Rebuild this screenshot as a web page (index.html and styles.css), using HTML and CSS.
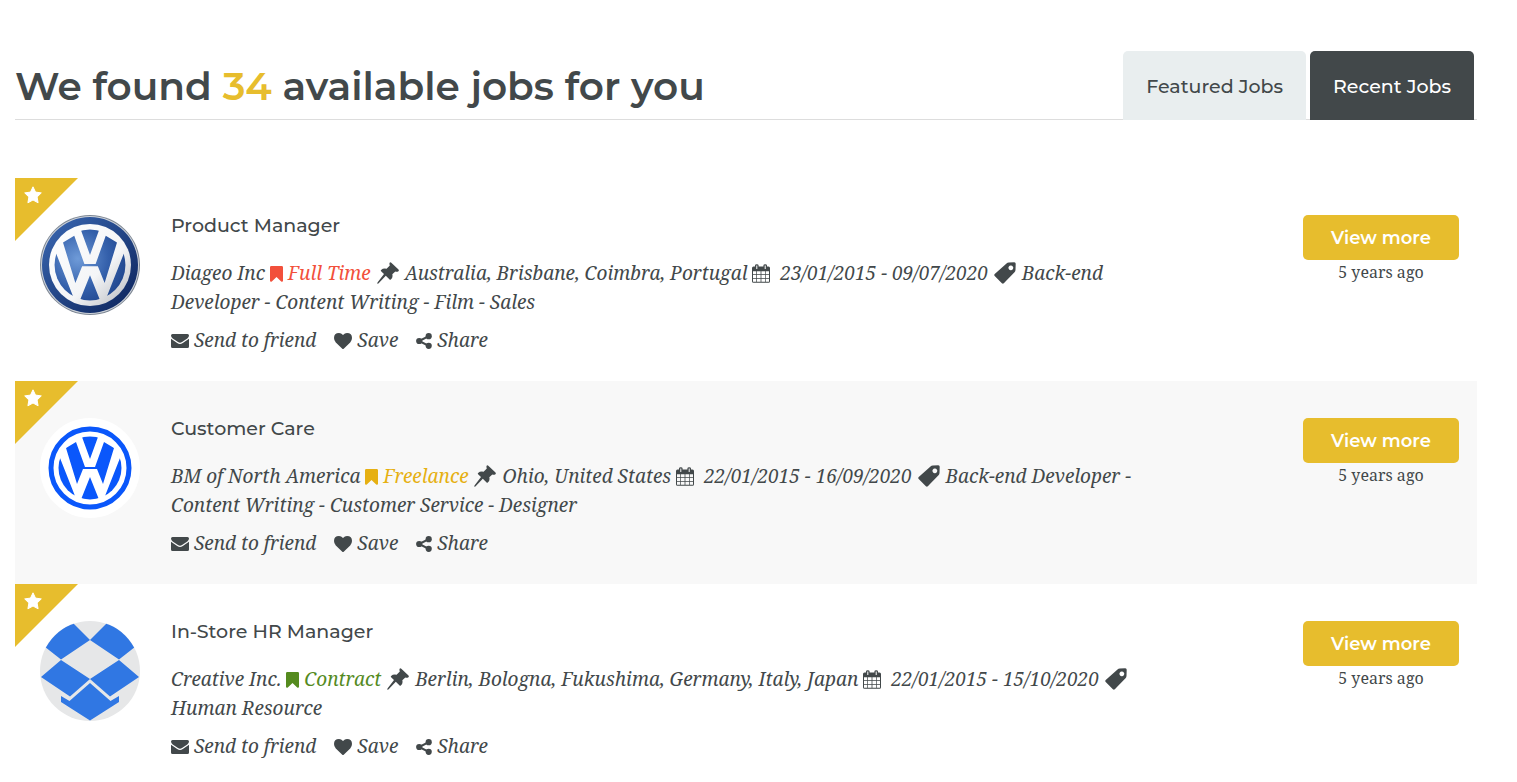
FILE: index.html
```
<!DOCTYPE html>
<html lang="en">
<head>
  <meta charset="UTF-8">
  <meta name="viewport" content="width=device-width, initial-scale=1">
  <title>Jobs</title>
  <link rel="stylesheet" href="styles.css">
</head>
<body>

  <!-- shared icons -->
  <svg class="sprite" aria-hidden="true">
    <symbol id="star" viewBox="0 0 18 18"><path d="M9 .8l2.500 5.300 5.800.8-4.200 4.100 1 5.800L9 14l-5.100 2.800 1-5.800L.7 6.900l5.800-.8z" stroke="currentColor" stroke-linejoin="round"/></symbol>
    <symbol id="bookmark" viewBox="0 0 13 16"><path d="M1.300 0h10.400Q13 0 13 1.300V14.700Q12.700 16.400 11.200 15.500L6.500 11l-4.700 4.500Q.3 16.400 0 14.700V1.300Q0 0 1.300 0z"/></symbol>
    <symbol id="pin" viewBox="0 0 22 22"><path d="M12.600.8q.8-.9 1.700-.1l7.200 6.900q.7.900-.1 1.600-1.500.9-3.100.2L15.300 12.300q.9 3.100-1.500 5.200-.6.400-1.200-.1l-3.800-3.600L1.400 21.400.2 21.700l.3-1.200L7 11.900 4.100 9.200q-.6-.6 0-1.200 2.200-2 5.500-1.200l3.200-3.200q-.6-1.500-.2-2.800z"/></symbol>
    <symbol id="calendar" viewBox="0 0 18 19"><path fill-rule="evenodd" d="M1.500 2.500H3V1.600Q3 .2 4.800.2t1.800 1.400v.9h4.800v-.9Q11.400.2 13.200.2T15 1.600v.9h1.500Q18 2.500 18 4v13.300q0 1.500-1.500 1.500h-15Q0 18.800 0 17.300V4q0-1.500 1.500-1.500zM4.300 1.500v3.600h1V1.500zm8.400 0v3.600h1V1.500zM1 7.300v3h3.300v-3zm4 0v3h3.600v-3zm4.400 0v3H13v-3zm4.300 0v3H17v-3zM1 11v3.200h3.300V11zm4 0v3.200h3.600V11zm4.400 0v3.200H13V11zm4.300 0v3.200H17V11zM1 14.900v2.900h3.300v-2.900zm4 0v2.900h3.600v-2.900zm4.400 0v2.900H13v-2.900zm4.300 0v2.900H17v-2.900z"/></symbol>
    <symbol id="tag" viewBox="0 0 22 22"><path fill-rule="evenodd" d="M12.500 1.400Q13.400.500 14.800.500L20.300.3Q21.700.3 21.700 1.800L21.500 8Q21.400 9.400 20.500 10.300L9.800 21.200q-.9.900-1.900 0L.7 13.900q-.9-.9 0-1.800zM16.800 3.400a2.400 2.400 0 1 0 .1 0z"/></symbol>
    <symbol id="mail" viewBox="0 0 18 14"><path d="M1.500 0h15Q18 0 18 1.500 18 3 16.300 4.400L11 8q-2 1.500-4 0L1.700 4.400Q0 3 0 1.500 0 0 1.500 0zM0 4.800l6.200 4.300q2.800 2 5.600 0L18 4.800v7.700q0 1.500-1.500 1.500h-15Q0 14 0 12.500z"/></symbol>
    <symbol id="heart" viewBox="0 0 18 16"><path d="M9 16q-.4 0-.7-.3L1.800 9.400Q0 7.400 0 5 0 0 5 0q2.200 0 4 2 1.800-2 4-2 5 0 5 5 0 2.400-1.800 4.400l-6.500 6.300Q9.400 16 9 16z"/></symbol>
    <symbol id="share" viewBox="0 0 16 16"><path d="M3.200 8l9.600-4.800M3.200 8l9.600 4.800" fill="none" stroke="currentColor" stroke-width="2"/><circle cx="3.200" cy="8" r="3.100"/><circle cx="12.700" cy="3.200" r="3.100"/><circle cx="12.700" cy="12.800" r="3.100"/></symbol>
    <symbol id="vw" viewBox="0 0 64 64"><g clip-path="url(#disc)"><path d="M8 12L18 6l9 25h10l9-25 10 6-11 36-6-15H25l-6 15zM24-2h16v3l-8 22-8-22zM32 41l-10 25h20zM-4 22h6l15 38-6 9-15-20zM68 22h-6L47 60l6 9 15-20z"/></g></symbol>
    <clipPath id="disc"><circle cx="32" cy="32" r="31.500"/></clipPath>
  </svg>

  <section class="jobs">
    <header class="jobs-header">
      <h2>We found <span>34</span> available jobs for you</h2>
      <nav class="tabs">
        <a class="tab" href="#featured">Featured Jobs</a>
        <a class="tab active" href="#recent">Recent Jobs</a>
      </nav>
    </header>

    <article class="job">
      <div class="ribbon"><svg><use href="#star"/></svg></div>
      <svg class="logo" viewBox="0 0 100 100" role="img" aria-label="Diageo Inc">
        <defs>
          <radialGradient id="blue" cx=".35" cy=".4" r=".75"><stop offset="0" stop-color="#6f9bd8"/><stop offset=".5" stop-color="#3460ab"/><stop offset="1" stop-color="#173a80"/></radialGradient>
          <linearGradient id="rim" x2="1" y2="1"><stop offset="0" stop-color="#3b69b4"/><stop offset="1" stop-color="#0b2259"/></linearGradient>
          <linearGradient id="silver" x2="1" y2="1"><stop offset="0" stop-color="#fff"/><stop offset=".6" stop-color="#f4f5f7"/><stop offset="1" stop-color="#b4b7bd"/></linearGradient>
        </defs>
        <circle cx="50" cy="50" r="50" fill="#7d8794"/>
        <circle cx="50" cy="50" r="49" fill="#cdd2d9"/>
        <circle cx="50" cy="50" r="48" fill="url(#rim)"/>
        <circle cx="50" cy="50" r="41" fill="url(#silver)"/>
        <use href="#vw" x="14" y="14" width="72" height="72" fill="url(#blue)"/>
      </svg>
      <div class="info">
        <h3>Product Manager</h3>
        <p class="meta">Diageo Inc <span class="type full-time"><svg class="bookmark"><use href="#bookmark"/></svg> Full Time</span> <svg class="pin"><use href="#pin"/></svg> Australia, Brisbane, Coimbra, Portugal <svg class="calendar"><use href="#calendar"/></svg> 23/01/2015 - 09/07/2020 <svg class="pin"><use href="#tag"/></svg> Back-end Developer - Content Writing - Film - Sales</p>
        <div class="links">
          <a href="#send"><svg class="mail"><use href="#mail"/></svg>Send to friend</a>
          <a href="#save"><svg class="heart"><use href="#heart"/></svg>Save</a>
          <a href="#share-job"><svg class="share"><use href="#share"/></svg>Share</a>
        </div>
      </div>
      <div class="action">
        <a class="more" href="#job-1">View more</a>
        <time>5 years ago</time>
      </div>
    </article>

    <article class="job">
      <div class="ribbon"><svg><use href="#star"/></svg></div>
      <svg class="logo" viewBox="0 0 100 100" role="img" aria-label="BM of North America">
        <circle cx="50" cy="50" r="50" fill="#fff"/>
        <circle cx="50" cy="50" r="39" fill="none" stroke="#0a57fb" stroke-width="5"/>
        <use href="#vw" x="18" y="18" width="64" height="64" fill="#0a57fb"/>
      </svg>
      <div class="info">
        <h3>Customer Care</h3>
        <p class="meta">BM of North America <span class="type freelance"><svg class="bookmark"><use href="#bookmark"/></svg> Freelance</span> <svg class="pin"><use href="#pin"/></svg> Ohio, United States <svg class="calendar"><use href="#calendar"/></svg> 22/01/2015 - 16/09/2020 <svg class="pin"><use href="#tag"/></svg> Back-end Developer - Content Writing - Customer Service - Designer</p>
        <div class="links">
          <a href="#send"><svg class="mail"><use href="#mail"/></svg>Send to friend</a>
          <a href="#save"><svg class="heart"><use href="#heart"/></svg>Save</a>
          <a href="#share-job"><svg class="share"><use href="#share"/></svg>Share</a>
        </div>
      </div>
      <div class="action">
        <a class="more" href="#job-2">View more</a>
        <time>5 years ago</time>
      </div>
    </article>

    <article class="job">
      <div class="ribbon"><svg><use href="#star"/></svg></div>
      <svg class="logo" viewBox="0 0 100 100" role="img" aria-label="Creative Inc.">
        <circle cx="50" cy="50" r="50" fill="#e6e7e8"/>
        <path fill="#3077e3" d="M50 19L21 38.500 0 22 30-1zM50 19l29 19.500L100 22 70-1zM21 39l29 19-20 17.500L1 56zM79 39L50 58l20 17.500L99 56zM50 62l20.500 18 8.500-5v6L50 99.500 21 81v-6l8.500 5z" clip-path="url(#round)"/>
        <clipPath id="round"><circle cx="50" cy="50" r="50"/></clipPath>
      </svg>
      <div class="info">
        <h3>In-Store HR Manager</h3>
        <p class="meta">Creative Inc. <span class="type contract"><svg class="bookmark"><use href="#bookmark"/></svg> Contract</span> <svg class="pin"><use href="#pin"/></svg> Berlin, Bologna, Fukushima, Germany, Italy, Japan <svg class="calendar"><use href="#calendar"/></svg> 22/01/2015 - 15/10/2020 <svg class="pin"><use href="#tag"/></svg> Human Resource</p>
        <div class="links">
          <a href="#send"><svg class="mail"><use href="#mail"/></svg>Send to friend</a>
          <a href="#save"><svg class="heart"><use href="#heart"/></svg>Save</a>
          <a href="#share-job"><svg class="share"><use href="#share"/></svg>Share</a>
        </div>
      </div>
      <div class="action">
        <a class="more" href="#job-3">View more</a>
        <time>5 years ago</time>
      </div>
    </article>
  </section>

</body>
</html>
```
FILE: styles.css
```
* {
  box-sizing: border-box;
}

body {
  margin: 0;
  background: #fff;
  color: #42484a;
  font-family: "Noto Serif", "Droid Serif", "DejaVu Serif", serif;
  font-size: 19px;
}

h2, h3, .tab, .more {
  font-family: Montserrat, Inter, sans-serif;
  font-weight: 600;
  margin: 0;
}

a {
  color: inherit;
  text-decoration: none;
}

svg {
  fill: currentColor;
}

.sprite {
  position: absolute;
  width: 0;
  height: 0;
}

.jobs {
  padding: 51px 40px 0 15px;
}

.jobs-header {
  display: flex;
  justify-content: space-between;
  border-bottom: 1px solid #ddd;
  margin-bottom: 58px;
}

h2 {
  padding-top: 2px;
  font-size: 39px;
  line-height: 66px;
}

h2 span {
  color: #e7bd2d;
}

.tabs {
  display: flex;
  gap: 4px;
  padding-right: 3px;
  margin-bottom: -1px;
}

.tab {
  padding: 2px 23px 0;
  font-size: 19px;
  font-weight: 500;
  line-height: 67px;
  background: #e9eeef;
  border-radius: 5px 5px 0 0;
}

.tab.active {
  background: #42484a;
  color: #fff;
}

.job {
  position: relative;
  display: flex;
  padding: 37px 18px 26px 25px;
}

.job:nth-of-type(even) {
  background: #f8f8f8;
}

.ribbon {
  position: absolute;
  top: 0;
  left: 0;
  width: 63px;
  height: 63px;
  padding: 8px 9px;
  background: #e7bd2d;
  clip-path: polygon(0 0, 100% 0, 0 100%);
  color: #fff;
}

.ribbon svg {
  display: block;
  width: 18px;
  height: 18px;
}

.logo {
  flex: none;
  width: 100px;
  height: 100px;
  margin-right: 31px;
}

.info {
  flex: 1;
  font-style: italic;
}

h3 {
  font-size: 19px;
  font-style: normal;
  font-weight: 500;
  line-height: 22px;
}

.meta {
  margin: 22px 0 9px;
  line-height: 29px;
}

.bookmark {
  width: 13px;
  height: 16px;
  vertical-align: -2px;
}

.pin {
  width: 22px;
  height: 22px;
  margin: 0 1px;
  vertical-align: -4px;
}

.calendar {
  width: 18px;
  height: 19px;
  margin-right: 5px;
  vertical-align: -3px;
}

.full-time {
  color: #f2503b;
}

.freelance {
  color: #e6b012;
}

.contract {
  color: #558b1f;
}

.links {
  display: flex;
  gap: 18px;
  line-height: 29px;
}

.links a {
  display: flex;
  align-items: center;
  gap: 5px;
}

.mail {
  width: 18px;
  height: 14px;
}

.heart {
  width: 18px;
  height: 16px;
}

.share {
  width: 16px;
  height: 16px;
}

.action {
  width: 156px;
  margin-left: 167px;
  text-align: center;
}

.more {
  display: block;
  padding-top: 1px;
  line-height: 44px;
  border-radius: 5px;
  background: #e7bd2d;
  color: #fff;
  font-size: 18px;
}

time {
  display: block;
  font-size: 16px;
  line-height: 24px;
}
```
